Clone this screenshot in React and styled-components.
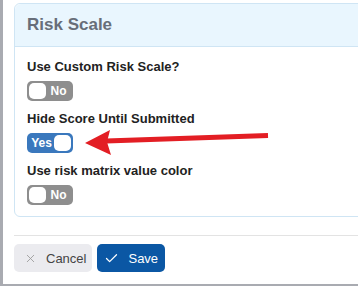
import React from "react";
import styled, { createGlobalStyle } from "styled-components";
import { X, Check } from "lucide-react";

const Global = createGlobalStyle`
  body {
    margin: 0;
    background: #fff;
    font-family: "Liberation Sans", Arial, sans-serif;
  }
`;

const Screen = styled.div`
  position: relative;
  width: 358px;
  height: 286px;
  overflow: hidden;
`;

const Frame = styled.div`
  box-sizing: border-box;
  width: 100%;
  height: 100%;
  border-left: 3px solid #a9abb1;
  border-bottom: 2px solid #a9abb1;
  padding: 3px 0 0 11px;
`;

const Card = styled.section`
  margin-right: -12px;
  border: 1px solid #cfe5f4;
  border-radius: 6px;
`;

const CardHeader = styled.header`
  height: 42px;
  display: flex;
  align-items: center;
  padding: 0 12px;
  background: #e9f6fe;
  border-bottom: 1px solid #cfe5f4;
  border-radius: 6px 6px 0 0;
`;

const Title = styled.h3`
  margin: 0;
  font-size: 17px;
  font-weight: 700;
  color: #676e79;
`;

const CardBody = styled.div`
  display: flex;
  flex-direction: column;
  gap: 10px;
  padding: 12px 12px 11px;
`;

const Field = styled.div`
  display: flex;
  flex-direction: column;
  align-items: flex-start;
  gap: 6px;
`;

const Label = styled.label`
  font-size: 13px;
  line-height: 16px;
  font-weight: 700;
  color: #222;
`;

const Toggle = styled.div`
  box-sizing: border-box;
  width: 46px;
  height: 20px;
  border-radius: 5px;
  padding: 2px;
  display: flex;
  align-items: center;
  justify-content: space-between;
  flex-direction: ${(p) => (p.$on ? "row" : "row-reverse")};
  background: ${(p) => (p.$on ? "#3a78bd" : "#8e8e8e")};
`;

const Knob = styled.span`
  width: 17px;
  height: 16px;
  border-radius: 5px;
  background: #fff;
`;

const ToggleText = styled.span`
  flex: 1;
  text-align: center;
  font-size: 12px;
  font-weight: 700;
  color: #fff;
  line-height: 16px;
`;

const Divider = styled.hr`
  margin: 18px -12px 8px 0;
  border: 0;
  border-top: 1px solid #e3e3e3;
`;

const Actions = styled.div`
  display: flex;
  gap: 5px;
`;

const Button = styled.button`
  height: 28px;
  display: flex;
  align-items: center;
  gap: 9px;
  padding: ${(p) => (p.$primary ? "0 7px 0 7px" : "0 6px 0 10px")};
  border: 0;
  border-radius: 5px;
  font-family: inherit;
  font-size: 13px;
  background: ${(p) => (p.$primary ? "#0b57a4" : "#ebebef")};
  color: ${(p) => (p.$primary ? "#fff" : "#444")};
`;

const Arrow = styled.svg`
  position: absolute;
  left: 0;
  top: 0;
  pointer-events: none;
`;

const SwitchField = ({ label, on }) => (
  <Field>
    <Label>{label}</Label>
    <Toggle $on={on}>
      <ToggleText>{on ? "Yes" : "No"}</ToggleText>
      <Knob />
    </Toggle>
  </Field>
);

export default function App() {
  return (
    <Screen>
      <Global />
      <Frame>
        <Card>
          <CardHeader>
            <Title>Risk Scale</Title>
          </CardHeader>
          <CardBody>
            <SwitchField label="Use Custom Risk Scale?" />
            <SwitchField label="Hide Score Until Submitted" on />
            <SwitchField label="Use risk matrix value color" />
          </CardBody>
        </Card>
        <Divider />
        <Actions>
          <Button>
            <X size={13} strokeWidth={1.6} color="#9a9a9a" />
            Cancel
          </Button>
          <Button $primary>
            <Check size={15} strokeWidth={2} color="#fff" />
            Save
          </Button>
        </Actions>
      </Frame>
      <Arrow width="358" height="286">
        <line x1="106" y1="141" x2="268" y2="135.5" stroke="#e31e24" strokeWidth="5" />
        <polygon points="85,143 110,130 107,142 111,155" fill="#e31e24" />
      </Arrow>
    </Screen>
  );
}
